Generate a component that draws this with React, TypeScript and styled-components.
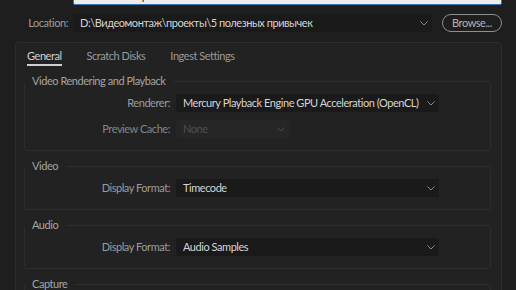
import React from "react";
import styled, { createGlobalStyle } from "styled-components";

const Global = createGlobalStyle`
  html, body { margin: 0; padding: 0; background: #1e1e1e; overflow: hidden; }
  body { font-family: Lato, Roboto, "Noto Sans", sans-serif; font-size: 11px; letter-spacing: -0.45px; line-height: 14px; }
  * { box-sizing: border-box; }
`;

const Page = styled.div`
  width: 516px;
  height: 290px;
  overflow: hidden;
  background: #1e1e1e;
  padding-right: 14px;
`;

const Header = styled.div`
  margin-top: -13px;
  display: flex;
  flex-direction: column;
  gap: 9px;
`;

const FormRow = styled.div`
  display: grid;
  grid-template-columns: 68px 1fr auto;
  column-gap: 5px;
  align-items: center;
`;

const TopLabel = styled.span`
  color: #9c9c9c;
  text-align: right;
  white-space: nowrap;
`;

const NameInput = styled.div`
  grid-column: 2 / 4;
  height: 18px;
  background: #ececec;
  border: 1px solid #3f74b3;
  border-radius: 2px;
  color: #222;
  padding: 0 6px;
  line-height: 16px;
`;

const Select = styled.div<{ $w?: number; $disabled?: boolean }>`
  height: 18px;
  width: ${(p) => (p.$w ? `${p.$w}px` : "auto")};
  background: ${(p) => (p.$disabled ? "#262626" : "#1a1a1a")};
  border-radius: 2px;
  display: flex;
  align-items: center;
  justify-content: space-between;
  padding: 0 4px 0 7px;
  color: ${(p) => (p.$disabled ? "#4f4f4f" : "#d4d4d4")};
  white-space: nowrap;
  overflow: hidden;
`;

const Chevron = ({ dim }: { dim?: boolean }) => (
  <svg width="8" height="5" viewBox="0 0 8 5" style={{ flex: "none" }}>
    <path d="M0.5 0.5 L4 4 L7.5 0.5" fill="none" stroke={dim ? "#4a4a4a" : "#8a8a8a"} strokeWidth="1" />
  </svg>
);

const BrowseButton = styled.button`
  margin-left: 5px;
  width: 60px;
  height: 18px;
  border: 1px solid #8f8f8f;
  border-radius: 9px;
  background: transparent;
  color: #b4b4b4;
  font: inherit;
  letter-spacing: inherit;
  padding: 0;
  line-height: 16px;
`;

const Panel = styled.div`
  margin: 10px 0 0 15px;
  border: 1px solid #2c2c2c;
  border-radius: 3px;
  background: #222222;
  padding: 0 10px 20px 8px;
  height: 300px;
`;

const Tabs = styled.div`
  display: flex;
  gap: 25px;
  padding: 6px 0 0 3px;
  height: 31px;
`;

const Tab = styled.div<{ $active?: boolean }>`
  color: ${(p) => (p.$active ? "#d2d2d2" : "#9a9a9a")};
  padding-bottom: 3px;
  height: 17px;
  line-height: 14px;
  border-bottom: 2px solid ${(p) => (p.$active ? "#cfcfcf" : "transparent")};
`;

const Groups = styled.div`
  display: flex;
  flex-direction: column;
  gap: 8px;
`;

const Group = styled.fieldset`
  margin: 0;
  padding: 6px 0 12px 0;
  border: 1px solid #2d2d2d;
  border-radius: 3px;
  display: flex;
  flex-direction: column;
  gap: 8px;
  min-width: 0;
`;

const Legend = styled.legend`
  padding: 0 8px 0 7px;
  margin-left: 0;
  height: 14px;
  color: #a4a4a4;
  line-height: 14px;
`;

const FieldRow = styled.div`
  display: grid;
  grid-template-columns: 145px auto;
  column-gap: 6px;
  align-items: center;
  justify-content: start;
`;

const FieldLabel = styled.span<{ $disabled?: boolean }>`
  color: ${(p) => (p.$disabled ? "#858585" : "#9c9c9c")};
  text-align: right;
  white-space: nowrap;
`;

export default function App() {
  return (
    <>
      <Global />
      <Page>
        <Header>
          <FormRow>
            <TopLabel>Name:</TopLabel>
            <NameInput>5 полезных привычек</NameInput>
          </FormRow>
          <FormRow>
            <TopLabel>Location:</TopLabel>
            <Select>
              <span>D:\Видеомонтаж\проекты\5 полезных привычек</span>
              <Chevron />
            </Select>
            <BrowseButton>Browse...</BrowseButton>
          </FormRow>
        </Header>
        <Panel>
          <Tabs>
            <Tab $active>General</Tab>
            <Tab>Scratch Disks</Tab>
            <Tab>Ingest Settings</Tab>
          </Tabs>
          <Groups>
            <Group>
              <Legend>Video Rendering and Playback</Legend>
              <FieldRow>
                <FieldLabel>Renderer:</FieldLabel>
                <Select $w={263}>
                  <span>Mercury Playback Engine GPU Acceleration (OpenCL)</span>
                  <Chevron />
                </Select>
              </FieldRow>
              <FieldRow>
                <FieldLabel $disabled>Preview Cache:</FieldLabel>
                <Select $w={113} $disabled>
                  <span>None</span>
                  <Chevron dim />
                </Select>
              </FieldRow>
            </Group>
            <Group>
              <Legend>Video</Legend>
              <FieldRow>
                <FieldLabel>Display Format:</FieldLabel>
                <Select $w={263}>
                  <span>Timecode</span>
                  <Chevron />
                </Select>
              </FieldRow>
            </Group>
            <Group>
              <Legend>Audio</Legend>
              <FieldRow>
                <FieldLabel>Display Format:</FieldLabel>
                <Select $w={263}>
                  <span>Audio Samples</span>
                  <Chevron />
                </Select>
              </FieldRow>
            </Group>
            <Group>
              <Legend>Capture</Legend>
              <FieldRow>
                <FieldLabel>Capture Format:</FieldLabel>
                <Select $w={263}>
                  <span>DV</span>
                  <Chevron />
                </Select>
              </FieldRow>
            </Group>
          </Groups>
        </Panel>
      </Page>
    </>
  );
}
